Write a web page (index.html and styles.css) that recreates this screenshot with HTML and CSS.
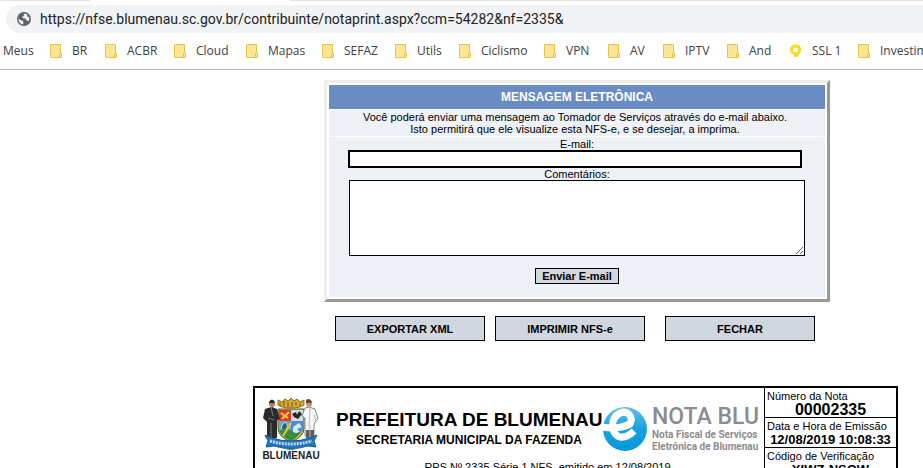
FILE: index.html
```html
<!DOCTYPE html>
<html lang="pt-BR">
<head>
<meta charset="utf-8">
<title>Nota Fiscal de Serviços Eletrônica</title>
<link rel="stylesheet" href="styles.css">
</head>
<body>
<svg class="symbols" aria-hidden="true">
  <symbol id="folder" viewBox="0 0 12 14">
    <path d="M.5.5h10v9h1v4H.5z" fill="#ffe594" stroke="#e8c547"/>
    <path d="M9.500 13V10q0-1 1-1t1 1v3.500" fill="#ffe594" stroke="#e8c547"/>
  </symbol>
</svg>
<header class="browser">
  <div class="tab-edge"><span></span></div>
  <div class="address">
    <svg class="globe" viewBox="0 0 14 14" aria-hidden="true">
      <circle cx="7" cy="7" r="7" fill="#5f6368"/>
      <path d="M8 1.500 6.500 2.500 7.500 4 5.500 4.500 5.500 6 8.500 6.500 9.500 8.500 11.500 9 12.500 7.500 12 5 10 4.500 10.500 3z" fill="#f1f3f4"/>
      <path d="M1.500 6.500 4 8.500 5.500 8.500 6.500 10.500 6 12.500Q1.500 11.500 1.500 6.500z" fill="#f1f3f4"/>
    </svg>
    <input class="url" type="text" aria-label="Endereço" value="https://nfse.blumenau.sc.gov.br/contribuinte/notaprint.aspx?ccm=54282&amp;nf=2335&amp;">
  </div>
  <nav class="bookmarks">
    <a href="#">Meus</a>
    <a href="#"><svg class="folder"><use href="#folder"/></svg>BR</a>
    <a href="#"><svg class="folder"><use href="#folder"/></svg>ACBR</a>
    <a href="#"><svg class="folder"><use href="#folder"/></svg>Cloud</a>
    <a href="#"><svg class="folder"><use href="#folder"/></svg>Mapas</a>
    <a href="#"><svg class="folder"><use href="#folder"/></svg>SEFAZ</a>
    <a href="#"><svg class="folder"><use href="#folder"/></svg>Utils</a>
    <a href="#"><svg class="folder"><use href="#folder"/></svg>Ciclismo</a>
    <a href="#"><svg class="folder"><use href="#folder"/></svg>VPN</a>
    <a href="#"><svg class="folder"><use href="#folder"/></svg>AV</a>
    <a href="#"><svg class="folder"><use href="#folder"/></svg>IPTV</a>
    <a href="#"><svg class="folder"><use href="#folder"/></svg>And</a>
    <a href="#"><svg class="folder" viewBox="0 0 12 14"><path fill="#fdd923" fill-rule="evenodd" d="M5.500.5C9 .5 11 2.500 11 5.500c0 3-1.500 5-4.500 7.500H4v-2.500C1.500 10 0 8.500 0 5.800 0 2.600 2.300.5 5.500.5zM5.500 3.500a2.500 2.500 0 1 0 0 5 2.500 2.500 0 1 0 0-5z"/></svg>SSL 1</a>
    <a href="#"><svg class="folder"><use href="#folder"/></svg>Investimentos</a>
  </nav>
</header>

<main class="page">
  <form class="message">
    <h1>MENSAGEM ELETRÔNICA</h1>
    <p class="intro">Você poderá enviar uma mensagem ao Tomador de Serviços através do e-mail abaixo.<br>Isto permitirá que ele visualize esta NFS-e, e se desejar, a imprima.</p>
    <div class="fields">
      <label for="email">E-mail:</label>
      <input id="email" type="text">
      <label for="comments">Comentários:</label>
      <textarea id="comments"></textarea>
      <button class="send" type="button">Enviar E-mail</button>
    </div>
  </form>

  <div class="actions">
    <button type="button">EXPORTAR XML</button>
    <button type="button">IMPRIMIR NFS-e</button>
    <button type="button" class="close">FECHAR</button>
  </div>

  <div class="sheet">
  <section class="note">
    <div class="crest">
      <svg viewBox="0 0 56 52" role="img" aria-label="Brasão">
        <path d="M15 7V2l4 2 3-3 3 2 3-3 3 3 3-2 3 3 4-2v5q-4 3-13 3T15 7z" fill="#d9ac31" stroke="#8b6818"/>
        <path d="M17 5v3m4-5v5m4-4v5m4-5v5m4-5v4m4-3v3" stroke="#72571c"/>
        <path d="M15 11h26v19q0 9-13 14Q15 39 15 30z" fill="#d8b842" stroke="#4b5940"/>
        <path d="M16 12h12v11H16z" fill="#db3b25"/>
        <path d="m18 15 7 5m-6 1 7-7" stroke="#f5c443" stroke-width="2"/>
        <path d="M28 12h12v11H28z" fill="#d5dce1"/>
        <path d="m29 16 4-2 1 3 2-4 3 3-4 5-4-2z" fill="#20272b"/>
        <path d="M16 23h12v17q-12-4-12-11z" fill="#69a9ca"/>
        <path d="m19 27 3-3 3 4-3 5-4-2z" fill="#2b6289" stroke="#bce0dd"/>
        <path d="M28 23h12v8q-2 6-12 10z" fill="#4d8ec6"/>
        <path d="m30 29 6-4 3 4-5 2 3 3-7 2z" fill="#d5e9f1"/>
        <path d="M16 33q7-5 13 0t9-1q-2 7-10 11-9-4-12-10z" fill="#388b42"/>
        <path d="m20 38 8-13" stroke="#e5c936" stroke-width="2"/>
        <circle cx="9" cy="6" r="3" fill="#ad7b60"/>
        <path d="M6 4q3-5 6 0l-1 1H6z" fill="#29221f"/>
        <path d="m5 10 4-1 5 2 3 10-3 1v18H4V24l-4-4 2-9z" fill="#292b2f"/>
        <path d="m8 9 2 9m-5 2 6 2m-3 3v15" stroke="#777b80"/>
        <circle cx="46" cy="6" r="3" fill="#c89069"/>
        <path d="M43 5V2q4-3 6 2l-1 1z" fill="#614233"/>
        <path d="m42 10 4-1 6 2 3 10-3 3-1 4v10h-9V20l-3-2z" fill="#f5f7f6" stroke="#858b8c"/>
        <path d="M43 32h8v8h-8z" fill="#596065"/>
        <path d="m47 10-1 18m1 0v12m4-23 2 6" stroke="#b4b9b9"/>
        <path d="m2 37 7 3q19 6 38 0l7-3-3 6 2 6-8-1q-17 5-34 0l-8 1 2-6z" fill="#2575bb" stroke="#155b9b"/>
        <path d="M7 43q21 6 42 0" fill="none" stroke="#bfd8ea" stroke-width="3" stroke-dasharray="2 1"/>
        <path d="m18 49 10 3 10-3" fill="none" stroke="#2575bb"/>
      </svg>
      <strong>BLUMENAU</strong>
    </div>
    <div class="issuer">
      <div class="heading">
        <div class="names">
          <h2>PREFEITURA DE BLUMENAU</h2>
          <h3>SECRETARIA MUNICIPAL DA FAZENDA</h3>
        </div>
        <svg class="emark" viewBox="0 0 46 48" role="img" aria-label="e">
          <defs>
            <linearGradient id="blue" x1="0" y1="0" x2="0" y2="1">
              <stop offset="0" stop-color="#62bfe7"/>
              <stop offset=".5" stop-color="#18a2df"/>
              <stop offset="1" stop-color="#0996dc"/>
            </linearGradient>
          </defs>
          <circle cx="23" cy="24" r="22" fill="url(#blue)"/>
          <path d="M0 22Q16 25 28 19C32 11 25 5 18 8 8 13 8 29 18 32q7 1 14-6" fill="none" stroke="#fff" stroke-width="7"/>
        </svg>
        <div class="brand">
          <strong>NOTA BLU</strong>
          <span>Nota Fiscal de Serviços<br>Eletrônica de Blumenau</span>
        </div>
      </div>
      <p class="rps">RPS Nº 2335 Série 1 NFS, emitido em 12/08/2019</p>
    </div>
    <dl class="summary">
      <div><dt>Número da Nota</dt><dd>00002335</dd></div>
      <div><dt>Data e Hora de Emissão</dt><dd>12/08/2019 10:08:33</dd></div>
      <div><dt>Código de Verificação</dt><dd>XIWZ-NSQW</dd></div>
    </dl>
  </section>
  </div>
</main>
</body>
</html>
```

FILE: styles.css
```css
* {
  box-sizing: border-box;
}

body {
  margin: 0;
  height: 100vh;
  overflow: hidden;
  background: #fff;
  color: #000;
  font: 11px/12px "Liberation Sans", Arial, sans-serif;
}

h1, h2, h3, p, dl, dd {
  margin: 0;
}

.symbols {
  display: none;
}

/* Browser toolbar */
.browser {
  height: 70px;
  overflow: hidden;
  border-bottom: 1px solid #b5b6b8;
  font-family: "Open Sans", "Segoe UI", sans-serif;
}

.tab-edge {
  height: 1px;
  padding-left: 90px;
  background: #dee1e6;
}

.tab-edge span {
  display: block;
  width: 200px;
  height: 1px;
  background: #fff;
}

.address {
  display: flex;
  align-items: center;
  gap: 9px;
  height: 28px;
  margin: 4px 0 0 6px;
  padding-left: 11px;
  border-radius: 14px 0 0 14px;
  background: #f1f3f4;
}

.globe {
  flex: none;
  width: 14px;
  height: 14px;
}

.url {
  flex: 1;
  height: 28px;
  padding: 0;
  border: 0;
  outline: 0;
  background: none;
  color: #202124;
  font: 14px/28px Roboto, "Segoe UI", sans-serif;
}

.bookmarks {
  display: grid;
  grid-template-columns: 47px 55px 69px 72px 76px 73px 64px 85px 64px 55px 64px 63px 68px auto;
  height: 36px;
  padding-left: 3px;
}

.bookmarks a {
  display: flex;
  align-items: center;
  gap: 10px;
  color: #3c4043;
  font-size: 12px;
  text-decoration: none;
  white-space: nowrap;
}

.folder {
  flex: none;
  width: 12px;
  height: 14px;
}

/* Page content */
.page {
  padding: 10px 0 0 231px;
}

.message {
  width: 506px;
  margin: 0 auto;
  padding: 2px;
  border: 3px solid;
  border-color: #eee #999 #999 #eee;
}

.message h1 {
  background: #6a8cc4;
  color: #fff;
  font-size: 12px;
  line-height: 24px;
  text-align: center;
}

.intro {
  margin: 1px 0;
  padding: 1px 4px 1px 0;
  background: #eef1f6;
  text-align: center;
}

.fields {
  display: flex;
  flex-direction: column;
  align-items: center;
  padding: 1px 19px 13px;
  background: #eef1f6;
}

.fields input {
  align-self: flex-start;
  width: 454px;
  height: 18px;
  border: 2px solid #000;
}

.fields textarea {
  width: 456px;
  height: 76px;
  border: 1px solid #000;
}

button {
  border: 1px solid #000;
  background: #d0d7df;
  color: #000;
  font: bold 11px/12px "Liberation Sans", Arial, sans-serif;
}

.send {
  height: 16px;
  margin-top: 12px;
  padding: 0 6px;
}

.actions {
  display: flex;
  justify-content: center;
  gap: 10px;
  margin-top: 14px;
  padding-right: 4px;
}

.actions button {
  width: 150px;
  height: 25px;
}

.actions .close {
  margin-left: 10px;
}

/* Printed note */
.sheet {
  display: flex;
  justify-content: center;
  margin-top: 45px;
  padding-right: 3px;
}

.note {
  display: flex;
  width: 645px;
  height: 200px;
  border: 2px solid #000;
}

.crest {
  display: flex;
  flex-direction: column;
  align-items: center;
  width: 76px;
  padding: 10px 4px 0 0;
}

.crest svg {
  width: 56px;
  height: 52px;
}

.crest strong {
  color: #222;
  font-size: 10px;
}

.issuer {
  flex: 1;
}

.heading {
  display: flex;
  height: 73px;
}

.names {
  width: 271px;
  padding: 20px 0 0 5px;
  text-align: center;
  white-space: nowrap;
}

.names h2 {
  font-size: 19px;
  line-height: 24px;
}

.names h3 {
  font-size: 12px;
  line-height: 16px;
}

.emark {
  flex: none;
  width: 46px;
  height: 48px;
  margin-top: 17px;
}

.brand {
  padding: 17px 0 0 4px;
  color: #8c8c8c;
  font-family: Roboto, sans-serif;
  font-weight: 500;
  white-space: nowrap;
}

.brand strong {
  display: block;
  font-size: 23px;
  font-weight: 500;
  line-height: 24px;
}

.brand span {
  display: block;
  font-size: 10px;
  font-weight: 700;
  line-height: 12px;
}

.rps {
  text-align: center;
}

.summary {
  width: 132px;
  border-left: 1px solid #000;
}

.summary div {
  height: 30px;
  padding: 2px 2px 0;
  border-bottom: 1px solid #000;
}

.summary dt {
  white-space: nowrap;
}

.summary dd {
  font-size: 13px;
  font-weight: bold;
  line-height: 15px;
  text-align: center;
  white-space: nowrap;
}

.summary div:first-child dd {
  font-size: 16px;
}
```
